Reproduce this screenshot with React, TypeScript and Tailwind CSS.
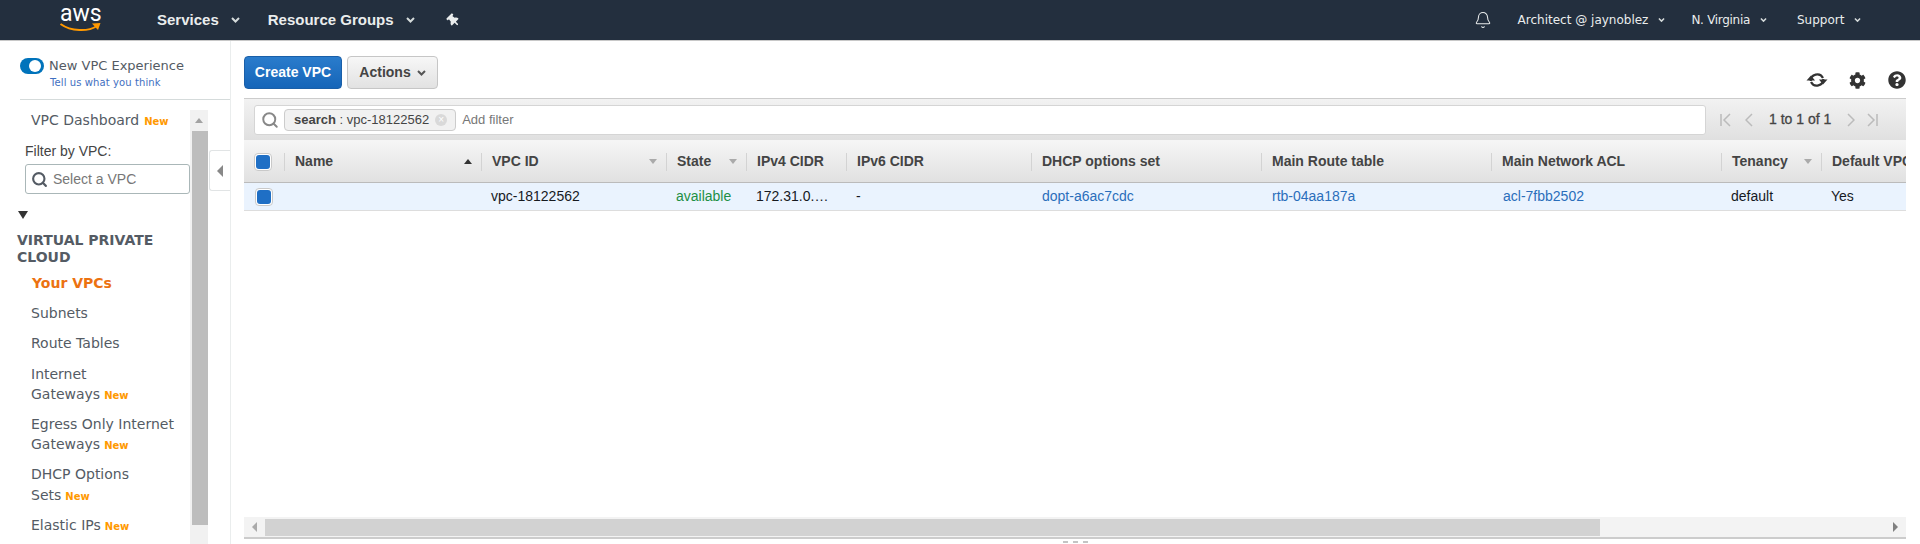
import { Bell, Search } from 'lucide-react';
import { FaCog, FaQuestionCircle, FaThumbtack } from 'react-icons/fa';

const VERDANA = "font-['DejaVu_Sans',sans-serif]";

function NewTag({ className = '' }: { className?: string }) {
  return <span className={`text-[10px] leading-none font-bold text-[#ff9900] ${className}`}>New</span>;
}

// small solid caret used all over the console chrome
function Caret({ className = '' }: { className?: string }) {
  return (
    <svg className={className} width="9" height="6" viewBox="0 0 9 6" fill="none" stroke="currentColor" strokeWidth="2">
      <path d="m1 1 3.5 3.5L8 1" />
    </svg>
  );
}

function RefreshIcon() {
  return (
    <svg width="22" height="18" viewBox="0 0 22 18" fill="none" stroke="currentColor" strokeWidth="2.2">
      <path d="M4.7 10A6.5 6.5 0 0 1 17 7" />
      <path d="M17.3 8A6.5 6.5 0 0 1 5 11" />
      <path d="M13 8.5h8.5L17 13.5Z" fill="currentColor" stroke="none" />
      <path d="M.5 9.5H9L5 4.5Z" fill="currentColor" stroke="none" />
    </svg>
  );
}

function TopLink({ label, className = '' }: { label: string; className?: string }) {
  return (
    <div className={`flex items-center text-[12px] text-[#eaeded] ${VERDANA} ${className}`}>
      {label}
      <Caret className="ml-[9px] text-[#d5dbdb] scale-75" />
    </div>
  );
}

function TopBar() {
  return (
    <header className="h-[41px] shrink-0 bg-[#232f3e] border-b border-[#c8c8c8] flex items-center text-white">
      <div className="relative w-[157px] h-full shrink-0">
        <span className="absolute left-[60px] top-[4px] text-[23px] leading-[20px] font-['Roboto',sans-serif] text-white">
          aws
        </span>
        <svg className="absolute left-[59px] top-[23px]" width="43" height="10" viewBox="0 1 43 10">
          <path d="M1.5 2 C12 9.5 29 10 38 4" fill="none" stroke="#ff9900" strokeWidth="2" />
          <path d="M33 1.6 L41.5 1 L39 8 Z" fill="#ff9900" />
        </svg>
      </div>
      <span className="text-[15px] font-bold font-['Liberation_Sans',sans-serif] text-[#eaeded]">Services</span>
      <Caret className="ml-[12px] text-[#d5dbdb]" />
      <span className="ml-[28px] text-[15px] font-bold font-['Liberation_Sans',sans-serif] text-[#eaeded]">
        Resource Groups
      </span>
      <Caret className="ml-[12px] text-[#d5dbdb]" />
      <FaThumbtack size={13} className="ml-[32px] -rotate-45 text-[#eaeded]" />
      <Bell size={18} strokeWidth={1.4} className="ml-[1014px] text-[#eaeded]" />
      <TopLink label="Architect @ jaynoblez" className="ml-[26px]" />
      <TopLink label="N. Virginia" className="ml-[25px] tracking-[-0.3px]" />
      <TopLink label="Support" className="ml-[29px]" />
    </header>
  );
}

function SideItem({ lines, active, tag }: { lines: string[]; active?: boolean; tag?: boolean }) {
  return (
    <div
      className={`py-[5px] text-[14px] leading-[20.2px] whitespace-nowrap ${VERDANA} ${
        active ? 'pl-[32px] font-bold text-[#ec7211]' : 'pl-[31px] text-[#545b64]'
      }`}
    >
      {lines.map((line, i) => (
        <div key={line}>
          {line}
          {tag && i === lines.length - 1 && <NewTag className="ml-[4px]" />}
        </div>
      ))}
    </div>
  );
}

function Sidebar() {
  return (
    <aside className="relative w-[231px] shrink-0 flex flex-col border-r border-[#eaeded] pt-[15px] pl-[20px] min-h-0">
      <div className="h-[44px] shrink-0 border-b border-[#d5dbdb]">
        <div className="flex items-center">
          <span className="relative w-[24px] h-[16px] rounded-full bg-[#0073bb]">
            <span className="absolute right-[3px] top-[2px] w-[12px] h-[12px] rounded-full bg-white" />
          </span>
          <span className={`ml-[5px] text-[13px] leading-[20px] text-[#545b64] ${VERDANA}`}>New VPC Experience</span>
        </div>
        <div className={`ml-[30px] text-[10px] leading-[14px] tracking-[0.1px] text-[#3f6fc1] ${VERDANA}`}>Tell us what you think</div>
      </div>
      <div className="flex-1 min-h-0 flex mt-[10px] -ml-[20px] overflow-hidden">
        <div className="w-[190px] shrink-0">
          <div className={`pl-[31px] text-[14px] leading-[20px] text-[#545b64] ${VERDANA}`}>
            VPC Dashboard
            <NewTag className="ml-[5px]" />
          </div>
          <div className="pl-[25px] pt-[11px] text-[14px] leading-[20px] text-[#444] font-['Liberation_Sans',sans-serif]">
            Filter by VPC:
          </div>
          <div className="ml-[25px] mt-[3px] w-[165px] h-[30px] border border-[#aab7b8] rounded-[3px] flex items-center pl-[5px] text-[14px] text-[#777] font-['Liberation_Sans',sans-serif]">
            <Search size={17} strokeWidth={3} className="text-[#545b64]" />
            <span className="ml-[5px]">Select a VPC</span>
          </div>
          <div className="ml-[18px] mt-[17px] w-0 h-0 border-x-[5px] border-x-transparent border-t-[8px] border-t-[#333]" />
          <div className={`pl-[17px] pt-[13px] text-[14px] leading-[17px] font-bold text-[#545b64] ${VERDANA}`}>
            VIRTUAL PRIVATE
            <br />
            CLOUD
          </div>
          <div className="pt-[2px]">
            <SideItem lines={['Your VPCs']} active />
            <SideItem lines={['Subnets']} />
            <SideItem lines={['Route Tables']} />
            <SideItem lines={['Internet', 'Gateways']} tag />
            <SideItem lines={['Egress Only Internet', 'Gateways']} tag />
            <SideItem lines={['DHCP Options', 'Sets']} tag />
            <SideItem lines={['Elastic IPs']} tag />
          </div>
        </div>
        <div className="w-[18px] shrink-0 bg-[#f1f1f1] flex flex-col">
          <div className="h-[21px] shrink-0 flex items-center justify-center">
            <div className="w-0 h-0 border-x-[4px] border-x-transparent border-b-[5px] border-b-[#a3a3a3]" />
          </div>
          <div className="ml-[2px] h-[394px] bg-[#bdbdbd]" />
        </div>
      </div>
      <button
        type="button"
        aria-label="Collapse"
        className="absolute right-0 top-[109px] w-[21px] h-[41px] bg-white border border-r-0 border-[#e1e4e5] rounded-l-[3px] flex items-center justify-center"
      >
        <span className="w-0 h-0 border-y-[6px] border-y-transparent border-r-[6px] border-r-[#888]" />
      </button>
    </aside>
  );
}

function CheckBox() {
  return (
    <span className="inline-flex items-center justify-center w-[18px] h-[18px] rounded-[4px] bg-white border border-[#c9c9c9]">
      <span className="w-[14px] h-[14px] rounded-[3px] bg-[#1f6fc5]" />
    </span>
  );
}

const columns = [
  { w: 'w-[197px]', label: 'Name', sort: 'up' },
  { w: 'w-[185px]', label: 'VPC ID', sort: 'down' },
  { w: 'w-[80px]', label: 'State', sort: 'down' },
  { w: 'w-[100px]', label: 'IPv4 CIDR' },
  { w: 'w-[185px]', label: 'IPv6 CIDR' },
  { w: 'w-[230px]', label: 'DHCP options set' },
  { w: 'w-[230px]', label: 'Main Route table' },
  { w: 'w-[230px]', label: 'Main Network ACL' },
  { w: 'w-[100px]', label: 'Tenancy', sort: 'down' },
  { w: 'w-[120px]', label: 'Default VPC' },
];

const cells: { text: string; color: string }[] = [
  { text: '', color: 'pl-[10px]' },
  { text: 'vpc-18122562', color: 'pl-[10px] text-[#16191f]' },
  { text: 'available', color: 'pl-[10px] text-[#1d8f45]' },
  { text: '172.31.0.…', color: 'pl-[10px] text-[#16191f]' },
  { text: '-', color: 'pl-[10px] text-[#16191f]' },
  { text: 'dopt-a6ac7cdc', color: 'pl-[11px] text-[#2a6ebb]' },
  { text: 'rtb-04aa187a', color: 'pl-[11px] text-[#2a6ebb]' },
  { text: 'acl-7fbb2502', color: 'pl-[12px] text-[#2a6ebb]' },
  { text: 'default', color: 'pl-[10px] text-[#16191f]' },
  { text: 'Yes', color: 'pl-[10px] text-[#16191f]' },
];

function Pager() {
  return (
    <div className="flex items-center ml-[14px] text-[#bbb]">
      <svg width="11" height="14" viewBox="0 0 11 14" fill="none" stroke="currentColor" strokeWidth="1.5">
        <path d="M1 1v12M10 1 4 7l6 6" />
      </svg>
      <svg className="ml-[14px]" width="8" height="14" viewBox="0 0 8 14" fill="none" stroke="currentColor" strokeWidth="1.5">
        <path d="M7 1 1 7l6 6" />
      </svg>
      <span className="mx-[16px] text-[14px] text-[#444] font-['Liberation_Sans',sans-serif] [-webkit-text-stroke:0.3px_#444]">
        1 to 1 of 1
      </span>
      <svg width="8" height="14" viewBox="0 0 8 14" fill="none" stroke="currentColor" strokeWidth="1.5">
        <path d="m1 1 6 6-6 6" />
      </svg>
      <svg className="ml-[12px]" width="11" height="14" viewBox="0 0 11 14" fill="none" stroke="currentColor" strokeWidth="1.5">
        <path d="M10 1v12M1 1l6 6-6 6" />
      </svg>
    </div>
  );
}

function MainPanel() {
  return (
    <main className="flex-1 min-w-0 flex flex-col pl-[13px] pr-[14px] font-['Liberation_Sans',sans-serif]">
      <div className="h-[57px] shrink-0 flex items-start pt-[15px]">
        <button
          type="button"
          className="w-[98px] h-[33px] rounded-[4px] border border-[#1a5fa8] bg-gradient-to-b from-[#2a7ccc] to-[#1565b8] text-white text-[14px] font-bold"
        >
          Create VPC
        </button>
        <button
          type="button"
          className="ml-[5px] w-[91px] h-[33px] rounded-[4px] border border-[#c6c6c6] bg-gradient-to-b from-[#f7f7f7] to-[#e2e2e2] text-[#444] text-[14px] font-bold flex items-center justify-center"
        >
          Actions
          <Caret className="ml-[6px] text-[#555]" />
        </button>
        <div className="ml-auto mt-[15px] flex items-center text-[#333]">
          <RefreshIcon />
          <FaCog size={17} className="ml-[21px]" />
          <FaQuestionCircle size={18} className="ml-[22px]" />
        </div>
      </div>
      <div className="h-[42px] shrink-0 border-t border-[#cccccc] bg-gradient-to-b from-[#f2f2f2] to-[#e0e0e0] flex items-center pl-[10px]">
        <div className="w-[1452px] h-[30px] bg-white border border-[#d5d5d5] rounded-[3px] flex items-center pl-[6px] text-[13px]">
          <Search size={18} strokeWidth={2.6} className="text-[#888]" />
          <span className="ml-[5px] h-[22px] pl-[9px] pr-[8px] flex items-center rounded-[4px] border border-[#ccc] bg-[#f1f1f1] text-[#444]">
            <b>search</b>&nbsp;: vpc-18122562
            <span className="ml-[6px] w-[12px] h-[12px] rounded-full bg-[#d9d9d9] text-white text-[10px] leading-[12px] text-center">×</span>
          </span>
          <span className="ml-[6px] text-[#777]">Add filter</span>
        </div>
        <Pager />
      </div>
      <div className="overflow-hidden shrink-0">
        <div className="h-[43px] w-max flex items-center border-t border-b border-t-[#f5f5f5] border-b-[#bbbbbb] bg-gradient-to-b from-[#f5f5f5] to-[#e1e1e1] text-[14px] font-bold text-[#444]">
          <div className="w-[40px] shrink-0 pl-[10px] flex items-center">
            <CheckBox />
          </div>
          {columns.map((col) => (
            <div key={col.label} className={`${col.w} shrink-0 h-[18px] flex items-center justify-between border-l border-[#d3d3d3] pl-[10px] pr-[9px] whitespace-nowrap`}>
              {col.label}
              {col.sort === 'up' && <span className="w-0 h-0 border-x-[4px] border-x-transparent border-b-[5px] border-b-[#333]" />}
              {col.sort === 'down' && <span className="w-0 h-0 border-x-[4px] border-x-transparent border-t-[5px] border-t-[#aaa]" />}
            </div>
          ))}
        </div>
        <div className="h-[28px] w-max flex items-center border-b border-[#dddddd] bg-[#eaf3fe] text-[14px]">
          <div className="w-[40px] shrink-0 pl-[11px] flex items-center">
            <CheckBox />
          </div>
          {columns.map((col, i) => (
            <div key={col.label} className={`${col.w} shrink-0 whitespace-nowrap ${cells[i].color}`}>
              {cells[i].text}
            </div>
          ))}
        </div>
      </div>
      <div className="mt-auto h-[22px] shrink-0 border-b-2 border-[#cccccc] bg-[#f3f3f3] flex items-center">
        <div className="w-[21px] flex justify-center">
          <span className="w-0 h-0 border-y-[5px] border-y-transparent border-r-[5px] border-r-[#aaa]" />
        </div>
        <div className="w-[1335px] h-[17px] bg-[#d2d2d2]" />
        <div className="ml-auto w-[21px] flex justify-center">
          <span className="w-0 h-0 border-y-[5px] border-y-transparent border-l-[5px] border-l-[#808080]" />
        </div>
      </div>
      {/* resize handle under the table */}
      <div className="h-[5px] shrink-0 flex items-center justify-center gap-[5px]">
        <span className="w-[5px] h-[2px] bg-[#c4c4c4]" />
        <span className="w-[5px] h-[2px] bg-[#c4c4c4]" />
        <span className="w-[5px] h-[2px] bg-[#c4c4c4]" />
      </div>
    </main>
  );
}

export default function App() {
  return (
    <div className="h-[544px] w-[1920px] overflow-hidden flex flex-col bg-white">
      <TopBar />
      <div className="flex-1 min-h-0 flex">
        <Sidebar />
        <MainPanel />
      </div>
    </div>
  );
}
